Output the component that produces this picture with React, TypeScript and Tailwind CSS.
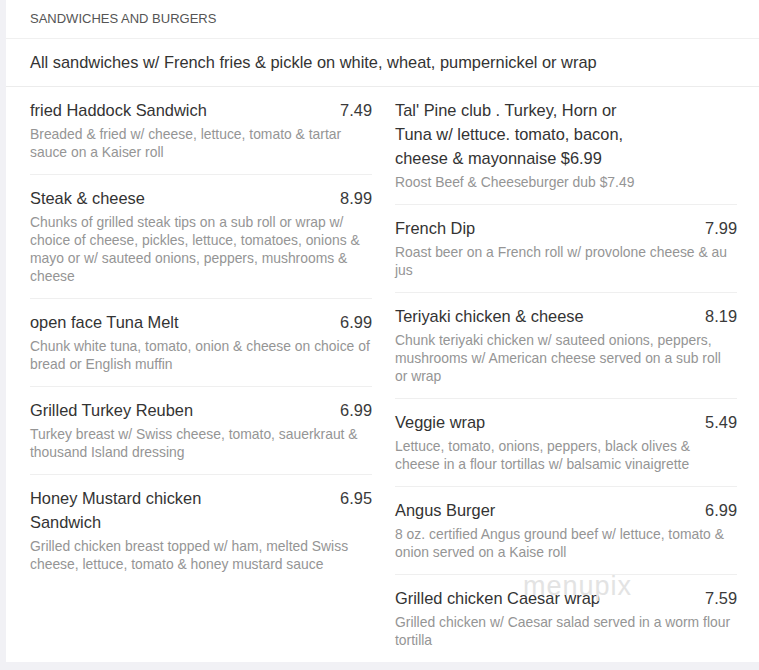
import React from "react";

type Item = { name: string; price?: string; desc: string };

const left: Item[] = [
  {
    name: "fried Haddock Sandwich",
    price: "7.49",
    desc: "Breaded & fried w/ cheese, lettuce, tomato & tartar sauce on a Kaiser roll",
  },
  {
    name: "Steak & cheese",
    price: "8.99",
    desc: "Chunks of grilled steak tips on a sub roll or wrap w/ choice of cheese, pickles, lettuce, tomatoes, onions & mayo or w/ sauteed onions, peppers, mushrooms & cheese",
  },
  {
    name: "open face Tuna Melt",
    price: "6.99",
    desc: "Chunk white tuna, tomato, onion & cheese on choice of bread or English muffin",
  },
  {
    name: "Grilled Turkey Reuben",
    price: "6.99",
    desc: "Turkey breast w/ Swiss cheese, tomato, sauerkraut & thousand Island dressing",
  },
  {
    name: "Honey Mustard chicken Sandwich",
    price: "6.95",
    desc: "Grilled chicken breast topped w/ ham, melted Swiss cheese, lettuce, tomato & honey mustard sauce",
  },
];

const right: Item[] = [
  {
    name: "Tal' Pine club . Turkey, Horn or Tuna w/ lettuce. tomato, bacon, cheese & mayonnaise $6.99",
    desc: "Roost Beef & Cheeseburger dub $7.49",
  },
  {
    name: "French Dip",
    price: "7.99",
    desc: "Roast beer on a French roll w/ provolone cheese & au jus",
  },
  {
    name: "Teriyaki chicken & cheese",
    price: "8.19",
    desc: "Chunk teriyaki chicken w/ sauteed onions, peppers, mushrooms w/ American cheese served on a sub roll or wrap",
  },
  {
    name: "Veggie wrap",
    price: "5.49",
    desc: "Lettuce, tomato, onions, peppers, black olives & cheese in a flour tortillas w/ balsamic vinaigrette",
  },
  {
    name: "Angus Burger",
    price: "6.99",
    desc: "8 oz. certified Angus ground beef w/ lettuce, tomato & onion served on a Kaise roll",
  },
  {
    name: "Grilled chicken Caesar wrap",
    price: "7.59",
    desc: "Grilled chicken w/ Caesar salad served in a worm flour tortilla",
  },
];

function MenuItem({ item, last }: { item: Item; last: boolean }) {
  return (
    <div className={"pt-[11px] pb-[13px] " + (last ? "" : "border-b border-[#efefef]")}>
      <div className="flex items-start justify-between">
        <div className="w-[70%] text-[16.4px] leading-[24px] text-[#333333]">{item.name}</div>
        {item.price ? (
          <div className="shrink-0 text-[16.4px] leading-[24px] text-[#3a3a3a]">{item.price}</div>
        ) : null}
      </div>
      <div className="mt-[3px] text-[13.9px] leading-[18px] text-[#959595]">{item.desc}</div>
    </div>
  );
}

export default function App() {
  return (
    <div
      className="flex h-[670px] w-[759px] bg-[#f1f1f5] pl-[6px]"
      style={{ fontFamily: '"Liberation Sans", Arial, sans-serif' }}
    >
      <div className="relative h-[662px] flex-1 bg-white">
        <div className="h-[39px] border-b border-[#f0f0f0] px-6 pt-[11px] text-[13px] leading-[16px] text-[#555555]">
          SANDWICHES AND BURGERS
        </div>
        <div className="flex h-[48px] items-center border-b border-[#ececec] px-6 text-[16.4px] text-[#333333]">
          All sandwiches w/ French fries &amp; pickle on white, wheat, pumpernickel or wrap
        </div>
        <div className="grid grid-cols-2 gap-x-[23px] pl-6 pr-[22px]">
          <div>
            {left.map((it, i) => (
              <MenuItem key={i} item={it} last={i === left.length - 1} />
            ))}
          </div>
          <div>
            {right.map((it, i) => (
              <MenuItem key={i} item={it} last={i === right.length - 1} />
            ))}
          </div>
        </div>
        <span className="pointer-events-none absolute left-[517px] top-[570px] text-[27px] font-light leading-[32px] tracking-[1px] text-[#e3e3e3]">
          menupix
        </span>
      </div>
    </div>
  );
}
